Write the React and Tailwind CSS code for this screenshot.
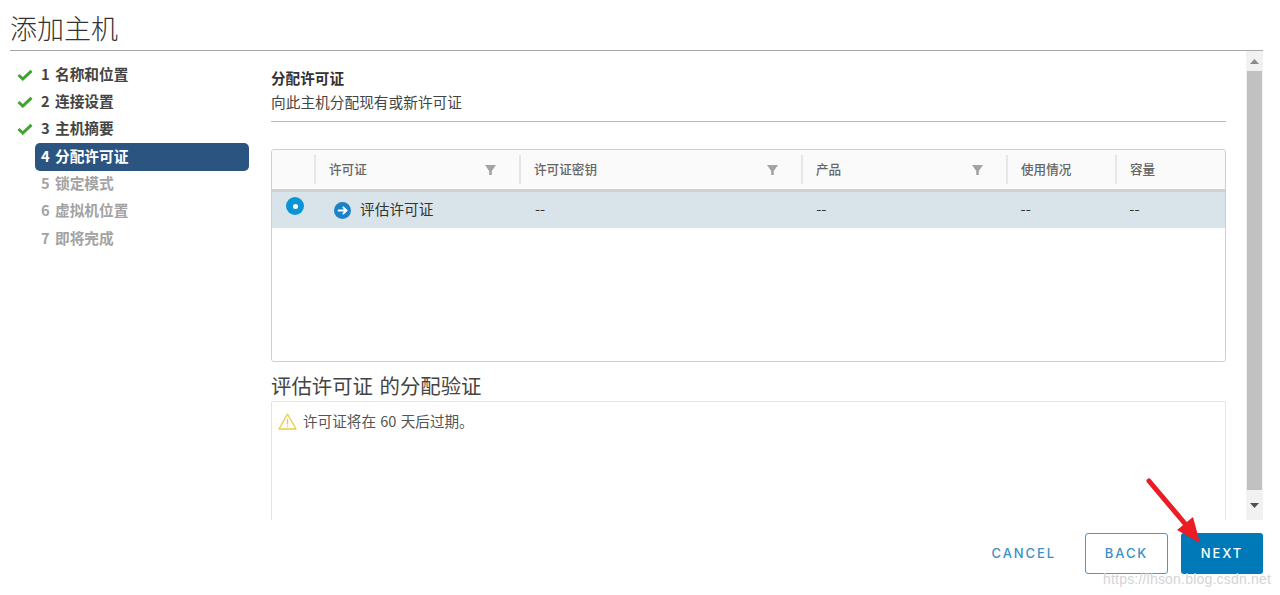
import React from "react";

const font = { fontFamily: '"Noto Sans CJK SC", "Noto Sans", sans-serif' };

function Check() {
  return (
    <svg width="16" height="12" viewBox="0 0 16 12" className="shrink-0">
      <path d="M1.5 6 L5.8 10 L14.5 1.8" fill="none" stroke="#3fa52f" strokeWidth="3" />
    </svg>
  );
}

function Step({ done, active, muted, children }) {
  return (
    <div className="flex h-[27.33px] items-center">
      <div className="flex w-[35px] shrink-0 justify-end pr-[2px]">{done && <Check />}</div>
      <div
        className={
          "flex h-[28px] w-[214px] shrink-0 items-center rounded-[5px] pb-[2px] pl-[6px] text-[14.7px] font-bold [word-spacing:2px] " +
          (active ? "bg-[#2b5580] text-white " : "") +
          (muted ? "text-[#a3a3a3] " : "") +
          (done ? "text-[#444444] " : "")
        }
      >
        {children}
      </div>
    </div>
  );
}

function Funnel() {
  return (
    <svg width="11" height="10" viewBox="0 0 11 10" className="shrink-0">
      <path d="M0 0 H11 L6.8 6 V10 H4.2 V6 Z" fill="#a0a4a6" />
    </svg>
  );
}

function Head({ w, label, filter }) {
  return (
    <div className={"flex items-center " + w}>
      <div className="flex h-[29px] w-full items-center justify-between border-l-2 border-[#e6e6e6] pl-[13px] pr-[23px]">
        <span className="text-[12.6px] font-medium text-[#666666]">{label}</span>
        {filter && <Funnel />}
      </div>
    </div>
  );
}

function Cell({ w, children }) {
  return <div className={"pl-[14px] pb-[1px] text-[14.7px] text-[#333333] " + w}>{children}</div>;
}

export default function App() {
  return (
    <div className="relative h-[595px] w-[1280px] overflow-hidden bg-white" style={font}>
      <div className="pl-[10px] pr-[17px]">
        <h1 className="h-[51px] border-b border-[#a8a8a8] pt-[8px] text-[27px] leading-[40px] font-light text-[#333333]">
          添加主机
        </h1>
      </div>

      <div className="flex h-[469px]">
        <nav className="w-[271px] shrink-0 pt-[10px]">
          <Step done>1 名称和位置</Step>
          <Step done>2 连接设置</Step>
          <Step done>3 主机摘要</Step>
          <Step active>4 分配许可证</Step>
          <Step muted>5 锁定模式</Step>
          <Step muted>6 虚拟机位置</Step>
          <Step muted>7 即将完成</Step>
        </nav>

        <main className="w-[955px] shrink-0 overflow-hidden">
          <div className="h-[71px] border-b border-[#b8b8b8] pt-[17px]">
            <div className="text-[14.6px] leading-[20px] font-bold text-[#333333]">分配许可证</div>
            <div className="mt-[4px] text-[14.7px] leading-[20px] text-[#444444]">向此主机分配现有或新许可证</div>
          </div>

          <div className="mt-[27px] h-[213px] overflow-hidden rounded-[3px] border border-[#cfcfcf]">
            <div className="flex h-[42px] items-center border-b-[3px] border-[#cfd1d2] bg-[#fafafa]">
              <div className="w-[42px] shrink-0" />
              <Head w="w-[205px]" label="许可证" filter />
              <Head w="w-[282px]" label="许可证密钥" filter />
              <Head w="w-[205px]" label="产品" filter />
              <Head w="w-[109px]" label="使用情况" />
              <Head w="w-[110px]" label="容量" />
            </div>
            <div className="relative flex h-[36px] items-center border-b border-[#e0e4e7] bg-[#d8e3ea]">
              <div className="flex w-[44px] shrink-0 items-start self-stretch pl-[14px] pt-[5px]">
                <div className="flex h-[18px] w-[18px] items-center justify-center rounded-full bg-[#0a94d6]">
                  <div className="h-[5px] w-[5px] rounded-full bg-white" />
                </div>
              </div>
              <div className="flex w-[205px] shrink-0 items-center pl-[18px] text-[14.7px] text-[#333333]">
                <svg width="17" height="17" viewBox="0 0 17 17" className="mr-[9px] mt-[2px] shrink-0">
                  <circle cx="8.5" cy="8.5" r="8.5" fill="#1b82c8" />
                  <path d="M3.8 8.5 H12 M8.8 4.8 L12.5 8.5 L8.8 12.2" fill="none" stroke="#fff" strokeWidth="1.9" />
                </svg>
                评估许可证
              </div>
              <Cell w="w-[282px]">--</Cell>
              <Cell w="w-[205px]">--</Cell>
              <Cell w="w-[109px]">--</Cell>
              <Cell w="w-[110px]">--</Cell>
            </div>
          </div>

          <h2 className="mt-[9px] h-[30px] text-[20.4px] leading-[28px] text-[#444444] [word-spacing:2px]">评估许可证 的分配验证</h2>
          <div className="flex h-[120px] items-start gap-[6px] rounded-t-[2px] border-x border-t border-[#e4e4e4] pl-[6px] pt-[9px] text-[14.6px] leading-[20px] text-[#555555] [word-spacing:1px]">
            <svg width="19" height="17" viewBox="0 0 19 17" className="mt-[2px] shrink-0">
              <path d="M9.5 1 L18 16 H1 Z" fill="none" stroke="#f2c744" strokeWidth="1.3" strokeLinejoin="round" />
              <path d="M9.5 6 V11.5 M9.5 12.8 V14.2" stroke="#f2c744" strokeWidth="1.3" />
            </svg>
            <span>许可证将在 60 天后过期。</span>
          </div>
        </main>

        <div className="ml-[20px] flex w-[17px] shrink-0 flex-col bg-[#f1f1f1]">
          <div className="flex h-[20px] items-center justify-center">
            <svg width="9" height="5" viewBox="0 0 9 5"><path d="M4.5 0 L9 5 H0 Z" fill="#8a8a8a" /></svg>
          </div>
          <div className="mx-[1px] flex-1 bg-[#c1c1c1]" />
          <div className="flex h-[30px] items-center justify-center">
            <svg width="9" height="5" viewBox="0 0 9 5"><path d="M0 0 H9 L4.5 5 Z" fill="#505050" /></svg>
          </div>
        </div>
      </div>

      <footer className="mt-[13px] flex items-center justify-end pr-[17px] text-[13px] tracking-[1.9px]" style={{ fontFamily: 'Inter, "Noto Sans", sans-serif' }}>
        <button className="mr-[29px] font-medium text-[#3d8fc4]">CANCEL</button>
        <button className="mr-[13px] h-[41px] w-[83px] rounded-[3px] border border-[#4a9ad0] font-medium text-[#3d8fc4]">BACK</button>
        <button className="h-[41px] w-[82px] rounded-[3px] bg-[#0079b8] font-medium text-white">NEXT</button>
      </footer>

      <svg width="70" height="90" viewBox="0 0 70 90" className="absolute left-[1140px] top-[472px]">
        <path d="M9 9 L47 54" stroke="#ec1c24" strokeWidth="5" strokeLinecap="round" />
        <path d="M60 71 L37 58 L53 45 Z" fill="#ec1c24" />
      </svg>

      <div className="absolute left-[1103px] top-[569px] text-[14px] tracking-[0.2px] text-[#d4d4d4]" style={{ fontFamily: '"Liberation Sans", sans-serif' }}>
        https://lhson.blog.csdn.net
      </div>
    </div>
  );
}
